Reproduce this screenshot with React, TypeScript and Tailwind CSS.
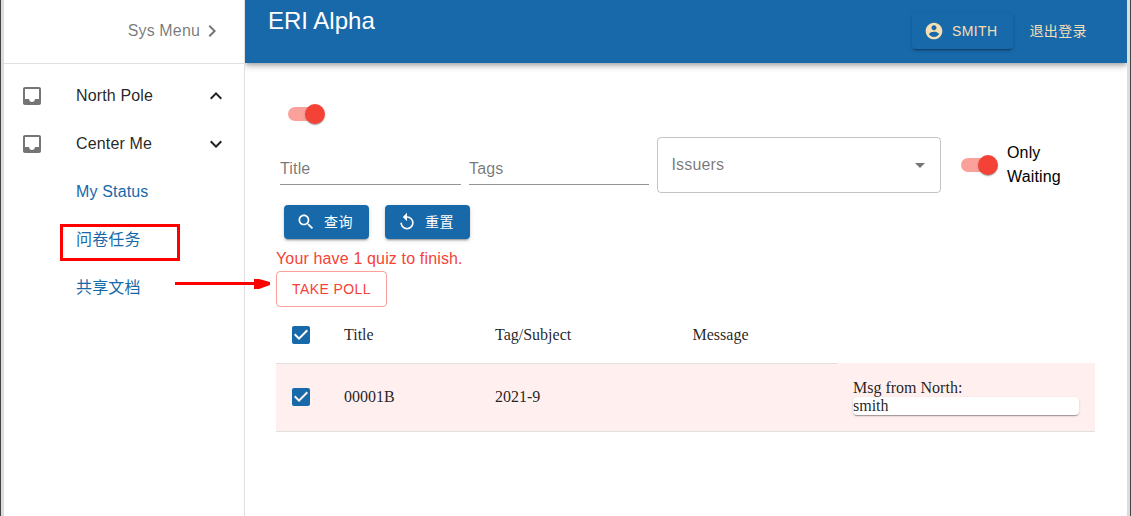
import type { ReactNode } from "react";

const ICONS = {
  inbox:
    "M19 3H4.99c-1.11 0-1.98.89-1.98 2L3 19c0 1.1.88 2 1.99 2H19c1.1 0 2-.9 2-2V5c0-1.11-.9-2-2-2zm0 12h-4c0 1.66-1.35 3-3 3s-3-1.34-3-3H4.99V5H19v10z",
  chevronRight: "M10 6L8.59 7.41 13.17 12l-4.58 4.59L10 18l6-6z",
  expandLess: "M12 8l-6 6 1.41 1.41L12 10.83l4.59 4.58L18 14z",
  expandMore: "M16.59 8.59L12 13.17 7.41 8.59 6 10l6 6 6-6z",
  account:
    "M12 2C6.48 2 2 6.48 2 12s4.48 10 10 10 10-4.48 10-10S17.52 2 12 2zm0 3c1.66 0 3 1.34 3 3s-1.34 3-3 3-3-1.34-3-3 1.34-3 3-3zm0 14.2c-2.5 0-4.71-1.28-6-3.22.03-1.99 4-3.08 6-3.08 1.99 0 5.97 1.09 6 3.08-1.29 1.94-3.5 3.22-6 3.22z",
  search:
    "M15.5 14h-.79l-.28-.27C15.41 12.59 16 11.11 16 9.5 16 5.91 13.09 3 9.5 3S3 5.91 3 9.5 5.91 16 9.5 16c1.61 0 3.09-.59 4.23-1.57l.27.28v.79l5 4.99L20.49 19l-4.99-5zm-6 0C7.01 14 5 11.99 5 9.5S7.01 5 9.5 5 14 7.01 14 9.5 11.99 14 9.5 14z",
  replay:
    "M12 5V1L7 6l5 5V7c3.31 0 6 2.69 6 6s-2.69 6-6 6-6-2.69-6-6H4c0 4.42 3.58 8 8 8s8-3.58 8-8-3.58-8-8-8z",
  dropDown: "M7 10l5 5 5-5z",
  checkBox:
    "M19 3H5c-1.11 0-2 .9-2 2v14c0 1.1.89 2 2 2h14c1.11 0 2-.9 2-2V5c0-1.1-.89-2-2-2zm-9 14l-5-5 1.41-1.41L10 14.17l7.59-7.59L19 8l-9 9z",
};

function Icon({ name, className }: { name: keyof typeof ICONS; className: string }) {
  return (
    <svg viewBox="0 0 24 24" fill="currentColor" className={`shrink-0 ${className}`} aria-hidden="true">
      <path d={ICONS[name]} />
    </svg>
  );
}

function Switch() {
  return (
    <span className="relative flex h-5 w-[37px] shrink-0 items-center">
      <span className="h-3.5 w-[34px] rounded-full bg-[#f44336]/50" />
      <span className="absolute right-0 size-5 rounded-full bg-[#f44336] shadow-[0_2px_1px_-1px_rgba(0,0,0,.2),0_1px_1px_rgba(0,0,0,.14),0_1px_3px_rgba(0,0,0,.12)]" />
    </span>
  );
}

function MenuGroup({ label, open }: { label: string; open: boolean }) {
  return (
    <button className="flex h-12 w-full items-center pr-4 pl-4 text-left text-black/87">
      <Icon name="inbox" className="size-6 text-black/54" />
      <span className="ml-8 flex-1">{label}</span>
      <Icon name={open ? "expandLess" : "expandMore"} className="size-6" />
    </button>
  );
}

function ActionButton({ icon, children }: { icon: "search" | "replay"; children: ReactNode }) {
  return (
    <button className="flex h-[34px] w-[85px] items-center rounded bg-[#1869aa] pl-3 text-sm tracking-[0.4px] text-white shadow-[0_3px_1px_-2px_rgba(0,0,0,.2),0_2px_2px_rgba(0,0,0,.14),0_1px_5px_rgba(0,0,0,.12)]">
      <Icon name={icon} className="mr-2 size-5" />
      {children}
    </button>
  );
}

function Sidebar() {
  return (
    <nav className="relative z-10 w-[241px] shrink-0 border-r border-black/12 bg-white">
      <div className="flex h-16 items-center justify-end border-b border-black/12 pr-5 pb-0.5 text-black/54">
        <span>Sys Menu</span>
        <Icon name="chevronRight" className="size-6" />
      </div>
      <div className="pt-2">
        <MenuGroup label="North Pole" open />
        <MenuGroup label="Center Me" open={false} />
        <a className="flex h-12 items-center pl-[72px] text-[#1869aa]">My Status</a>
        <div className="relative flex h-12 items-center pl-[72px] text-[#1869aa]">
          问卷任务
          <span className="absolute top-2 left-14 h-[37px] w-[120px] border-3 border-[#ff0000]" />
        </div>
        <div className="relative flex h-12 items-center pl-[72px] text-[#1869aa]">
          共享文档
          <svg className="absolute top-[14px] left-[171px] h-3 w-24 text-[#ff0000]" viewBox="0 0 96 12" fill="currentColor">
            <path d="M0 4h80v3H0zM79 1h5l11 3v3l-11 4h-5z" />
          </svg>
        </div>
      </div>
    </nav>
  );
}

function Header() {
  return (
    <header className="flex h-[63px] bg-[#1869aa] pl-[23px] shadow-[0_2px_4px_-1px_rgba(0,0,0,.2),0_4px_5px_rgba(0,0,0,.14),0_1px_10px_rgba(0,0,0,.12)]">
      <h1 className="flex-1 pt-0.5 text-2xl leading-[38px] tracking-normal text-white">ERI Alpha</h1>
      <button className="mt-[13px] flex h-9 w-[101px] items-center rounded pl-3 text-sm tracking-[0.4px] text-[#f5deb3] shadow-[0_3px_1px_-2px_rgba(0,0,0,.2),0_2px_2px_rgba(0,0,0,.14),0_1px_5px_rgba(0,0,0,.12)]">
        <Icon name="account" className="mr-[7.5px] size-5" />
        SMITH
      </button>
      <button className="mt-[13px] mr-10 ml-4 h-9 text-sm tracking-[0.4px] text-[#f5deb3]">退出登录</button>
    </header>
  );
}

function Filters() {
  return (
    <div className="flex h-[65px]">
      <div className="mt-[27px] ml-1 h-[30px] w-[181px] border-b border-[#949494] pt-0.5 text-black/54">Title</div>
      <div className="mt-[27px] ml-2 h-[30px] w-[180px] border-b border-[#949494] pt-0.5 text-black/54">Tags</div>
      <div className="mt-[9px] ml-2 flex h-14 w-[284px] items-center rounded border border-black/23 pr-2 pl-[13.5px] text-black/54">
        <span className="flex-1">Issuers</span>
        <Icon name="dropDown" className="size-6" />
      </div>
      <div className="mt-[13px] ml-5 flex h-12 items-center">
        <Switch />
        <div className="ml-[9px] w-16 text-black">Only Waiting</div>
      </div>
    </div>
  );
}

function PollTable() {
  return (
    <table className="w-[819px] table-fixed border-separate border-spacing-0 text-left font-['Liberation_Serif',serif] text-base leading-[18px] tracking-normal text-black/87">
      <colgroup>
        <col className="w-[52px]" />
        <col className="w-[151px]" />
        <col className="w-[198px]" />
        <col className="w-[160px]" />
        <col />
      </colgroup>
      <thead>
        <tr className="h-14 [&>th]:px-4 [&>th]:font-normal">
          <th>
            <Icon name="checkBox" className="-ml-[3px] size-6 text-[#1869aa]" />
          </th>
          <th>Title</th>
          <th>Tag/Subject</th>
          <th>
            <span className="-ml-[0.5px]">Message</span>
          </th>
        </tr>
      </thead>
      <tbody>
        <tr className="h-[69px] [&>td]:border-b [&>td]:border-[#e0e0e0] [&>td]:bg-[#ffefee] [&>td]:px-4 [&>td:not(:last-child)]:border-t [&>td:not(:last-child)]:pb-0.5">
          <td>
            <Icon name="checkBox" className="-ml-[3px] size-6 text-[#1869aa]" />
          </td>
          <td>00001B</td>
          <td>2021-9</td>
          <td />
          <td>
            <div>Msg from North:</div>
            <div className="rounded bg-white shadow-[0_2px_1px_-1px_rgba(0,0,0,.2),0_1px_1px_rgba(0,0,0,.14),0_1px_3px_rgba(0,0,0,.12)]">
              smith
            </div>
          </td>
        </tr>
      </tbody>
    </table>
  );
}

export default function App() {
  return (
    <div className="flex h-[516px] w-[1131px] overflow-hidden border-x border-[#444444] bg-white font-['Liberation_Sans','Noto_Sans_CJK_SC',sans-serif] text-base leading-6 tracking-[0.15px]">
      <div className="w-[3px] shrink-0 bg-[#dadce0]" />
      <Sidebar />
      <div className="min-w-0 flex-1">
        <Header />
        <main className="pl-[31px]">
          <div className="flex h-[65px] pt-[41px] pl-3">
            <Switch />
          </div>
          <Filters />
          <div className="mt-3 flex gap-4 pl-2">
            <ActionButton icon="search">查询</ActionButton>
            <ActionButton icon="replay">重置</ActionButton>
          </div>
          <p className="mt-2 text-[#f44336]">Your have 1 quiz to finish.</p>
          <button className="block h-9 w-[111px] rounded border border-[#f44336]/50 text-sm tracking-[0.4px] text-[#f44336]">
            TAKE POLL
          </button>
          <PollTable />
        </main>
      </div>
      <div className="z-10 w-[3px] shrink-0 bg-[#dadce0]" />
    </div>
  );
}
